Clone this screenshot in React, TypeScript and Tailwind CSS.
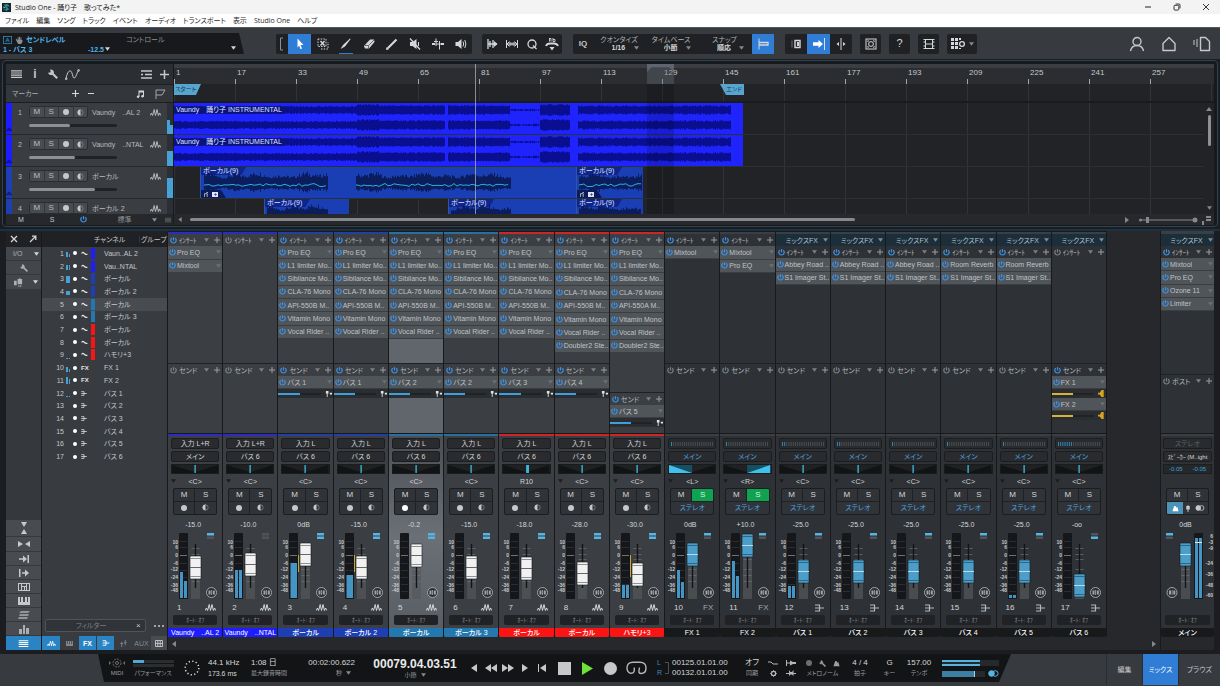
import React, { useState } from 'react';
import clsx from 'clsx';

type Kind = 'audio' | 'fx' | 'bus';

interface Channel {
  id: number;
  name: string;
  listName: string;
  kind: Kind;
  tone: Tone;
  inserts: string[];
  sends: string[];
  input?: string;
  output: string;
  pan: string;
  value: string;
  cap: number;
  levels?: number[];
  reduction?: number;
  mono?: boolean;
  fold?: boolean;
}

type Tone = 'blue' | 'navy' | 'steel' | 'red' | 'none';

const TONE_BAR: Record<Tone, string> = {
  blue: 'bg-[#2c2cc0]',
  navy: 'bg-[#24409c]',
  steel: 'bg-[#2b6f9e]',
  red: 'bg-[#cc2626]',
  none: 'bg-[#3b3f43]',
};

const TONE_LABEL: Record<Tone, string> = {
  blue: 'bg-[#1d1dff]',
  navy: 'bg-[#1e3eb4]',
  steel: 'bg-[#2478b0]',
  red: 'bg-[#fb1414]',
  none: 'bg-[#17191b]',
};

const VOCAL = ['Pro EQ', 'L1 limiter Mo..', 'Sibilance Mo..', 'CLA-76 Mono', 'API-550B M..', 'Vitamin Mono', 'Vocal Rider ..'];
const LEAD = VOCAL.map((v) => (v === 'API-550B M..' ? 'API-550A M..' : v));
const ABBEY = ['Abbey Road ..', 'S1 Imager St..'];
const ROOM = ['Room Reverb', 'S1 Imager St..'];

const CHANNELS: Channel[] = [
  { id: 1, name: 'Vaundy　..AL 2', listName: 'Vaun..AL 2', kind: 'audio', tone: 'blue', inserts: ['Pro EQ', 'Mixtool'], sends: [], input: '入力 L+R', output: 'メイン', pan: '<C>', value: '-15.0', cap: 23, levels: [39, 48], fold: true },
  { id: 2, name: 'Vaundy　..NTAL', listName: 'Vau..NTAL', kind: 'audio', tone: 'blue', inserts: [], sends: [], input: '入力 L+R', output: 'バス 6', pan: '<C>', value: '-10.0', cap: 20, levels: [37, 37], fold: true },
  { id: 3, name: 'ボーカル', listName: 'ボーカル', kind: 'audio', tone: 'navy', inserts: VOCAL, sends: ['バス 1'], input: '入力 L', output: 'バス 6', pan: '<C>', value: '0dB', cap: 10, levels: [30], reduction: 17, mono: true },
  { id: 4, name: 'ボーカル 2', listName: 'ボーカル 2', kind: 'audio', tone: 'navy', inserts: VOCAL, sends: ['バス 1'], input: '入力 L', output: 'バス 6', pan: '<C>', value: '-15.0', cap: 23, levels: [42], reduction: 17, mono: true },
  { id: 5, name: 'ボーカル', listName: 'ボーカル', kind: 'audio', tone: 'steel', inserts: VOCAL, sends: ['バス 2'], input: '入力 L', output: 'バス 6', pan: '<C>', value: '-0.2', cap: 11, mono: true },
  { id: 6, name: 'ボーカル 3', listName: 'ボーカル 3', kind: 'audio', tone: 'steel', inserts: VOCAL, sends: ['バス 2'], input: '入力 L', output: 'バス 6', pan: '<C>', value: '-15.0', cap: 23, mono: true },
  { id: 7, name: 'ボーカル', listName: 'ボーカル', kind: 'audio', tone: 'red', inserts: VOCAL, sends: ['バス 3'], input: '入力 L', output: 'バス 6', pan: 'R10', value: '-18.0', cap: 24, mono: true },
  { id: 8, name: 'ボーカル', listName: 'ボーカル', kind: 'audio', tone: 'red', inserts: [...VOCAL, 'Doubler2 Ste..'], sends: ['バス 4'], input: '入力 L', output: 'バス 6', pan: '<C>', value: '-28.0', cap: 29, mono: true, fold: true },
  { id: 9, name: 'ハモリ+3', listName: 'ハモリ+3', kind: 'audio', tone: 'red', inserts: [...LEAD, 'Doubler2 Ste..'], sends: ['バス 5'], input: '入力 L', output: 'バス 6', pan: '<C>', value: '-30.0', cap: 30, levels: [52, 52], reduction: 22, mono: true, fold: true },
  { id: 10, name: 'FX 1', listName: 'FX 1', kind: 'fx', tone: 'none', inserts: ['Mixtool'], sends: [], output: 'メイン', pan: '<L>', value: '0dB', cap: 10, levels: [37, 49], fold: true },
  { id: 11, name: 'FX 2', listName: 'FX 2', kind: 'fx', tone: 'none', inserts: ['Mixtool', 'Pro EQ'], sends: [], output: 'メイン', pan: '<R>', value: '+10.0', cap: 1, levels: [28, 43], fold: true },
  { id: 12, name: 'バス 1', listName: 'バス 1', kind: 'bus', tone: 'none', inserts: ABBEY, sends: [], output: 'メイン', pan: '<C>', value: '-25.0', cap: 27, levels: [53, 53], fold: true },
  { id: 13, name: 'バス 2', listName: 'バス 2', kind: 'bus', tone: 'none', inserts: ABBEY, sends: [], output: 'メイン', pan: '<C>', value: '-25.0', cap: 27, fold: true },
  { id: 14, name: 'バス 3', listName: 'バス 3', kind: 'bus', tone: 'none', inserts: ABBEY, sends: [], output: 'メイン', pan: '<C>', value: '-25.0', cap: 27, fold: true },
  { id: 15, name: 'バス 4', listName: 'バス 4', kind: 'bus', tone: 'none', inserts: ROOM, sends: [], output: 'メイン', pan: '<C>', value: '-25.0', cap: 27, fold: true },
  { id: 16, name: 'バス 5', listName: 'バス 5', kind: 'bus', tone: 'none', inserts: ROOM, sends: [], output: 'メイン', pan: '<C>', value: '-25.0', cap: 27, levels: [62, 62], fold: true },
  { id: 17, name: 'バス 6', listName: 'バス 6', kind: 'bus', tone: 'none', inserts: [], sends: ['FX 1', 'FX 2'], output: 'メイン', pan: '<C>', value: '-oo', cap: 41, fold: true },
];

const TRACKS = [
  { id: 1, name: 'Vaundy　..AL 2', tone: 'bg-[#1d1dff]', fill: 'w-[41px]', meter: [14, 9] },
  { id: 2, name: 'Vaundy　..NTAL', tone: 'bg-[#1d1dff]', fill: 'w-[46px]', meter: [15, 15] },
  { id: 3, name: 'ボーカル', tone: 'bg-[#1e3eb4]', fill: 'w-[66px]', meter: [20, 20] },
  { id: 4, name: 'ボーカル 2', tone: 'bg-[#1e3eb4]', fill: 'w-[44px]', meter: [0, 0] },
];

const BARS = [1, 17, 33, 49, 65, 81, 97, 113, 129, 145, 161, 177, 193, 209, 225, 241, 257];
const MENUS = ['ファイル', '編集', 'ソング', 'トラック', 'イベント', 'オーディオ', 'トランスポート', '表示', 'Studio One', 'ヘルプ'];

/* ---------- icons ---------- */

const Power = ({ on = true }: { on?: boolean }) => (
  <svg viewBox="0 0 8 8" className="size-[7px] shrink-0" fill="none" stroke={on ? '#3d92e6' : '#7b8084'} strokeWidth="1.4">
    <path d="M2.1 1.3A3.1 3.1 0 1 0 5.9 1.3" />
    <path d="M4 0.2V4" />
  </svg>
);

const Down = ({ className = 'text-[#85898d]' }: { className?: string }) => (
  <svg viewBox="0 0 6 4" className={clsx('h-[4px] w-[5px] shrink-0', className)} fill="currentColor">
    <path d="M0 0H6L3 4Z" />
  </svg>
);

const Plus = ({ className = 'size-[6px]' }: { className?: string }) => (
  <svg viewBox="0 0 6 6" className={clsx('shrink-0', className)} stroke="currentColor" strokeWidth="1">
    <path d="M3 0V6M0 3H6" />
  </svg>
);

const Wave = ({ className = 'h-[9px] w-[11px]' }: { className?: string }) => (
  <svg viewBox="0 0 11 9" className={clsx('shrink-0', className)} fill="none" stroke="currentColor" strokeWidth="1">
    <path d="M0.3 7.5L1.4 5L2.6 7.5L4.2 1.5L5.5 7.5L7 1.5L8.4 7.5L9.6 5L10.7 7.5" />
  </svg>
);

const BusIcon = ({ className = 'h-[8px] w-[9px]' }: { className?: string }) => (
  <svg viewBox="0 0 9 8" className={clsx('shrink-0', className)} fill="none" stroke="currentColor" strokeWidth="1.2">
    <path d="M0 1H4.5V7H0M0 4H9" />
  </svg>
);

const Wrench = ({ className = 'size-[9px]' }: { className?: string }) => (
  <svg viewBox="0 0 9 9" className={clsx('shrink-0', className)} fill="none" stroke="currentColor">
    <path d="M4.2 4.2L8.3 8.3" strokeWidth="1.9" />
    <path d="M2.6 0.9C5.2 0.7 5.6 4.6 3.2 4.9C2.2 5 1.2 4.6 0.8 3.8L2.9 3.3Z" strokeWidth="1" fill="currentColor" />
  </svg>
);

const Half = () => (
  <svg viewBox="0 0 8 8" className="size-[7px]">
    <circle cx="4" cy="4" r="3" fill="none" stroke="#8e9296" strokeWidth=".8" />
    <path d="M4 .6A3.4 3.4 0 0 0 4 7.4Z" fill="#c6c8ca" />
  </svg>
);

const Dot = ({ className = 'size-[6px] bg-[#c6c8ca]' }: { className?: string }) => (
  <span className={clsx('block shrink-0 rounded-full', className)} />
);

const Lines = ({ className = 'h-[8px] w-[11px]' }: { className?: string }) => (
  <svg viewBox="0 0 11 8" className={className} stroke="currentColor" strokeWidth="1.2">
    <path d="M0 .8H11M0 3H11M0 5.2H11M0 7.4H11" />
  </svg>
);

const Keys = ({ className = 'h-[8px] w-[11px]' }: { className?: string }) => (
  <svg viewBox="0 0 11 8" className={className} fill="currentColor">
    <path d="M0 0H2V5H3V0H5V5H6V0H8V5H9V0H11V8H0Z" />
  </svg>
);

/* ---------- window chrome ---------- */

const TitleBar = () => (
  <header className="flex h-[14px] items-center bg-[#f3f3f3] pl-[2px] text-[7px] text-[#1b1b1b] [font-family:'Open_Sans','Noto_Sans_CJK_JP',sans-serif]">
    <svg viewBox="0 0 10 10" className="mr-1 size-[9px]">
      <rect width="10" height="10" fill="#16242c" />
      <path d="M2 2L6 1L9 4L5 3.5L8 7L5 9L1 7L5 7Z" fill="#2d8a94" />
      <path d="M1 4L4 5L2 6Z" fill="#5ec1c4" />
    </svg>
    <h1>Studio One - 踊り子　歌ってみた*</h1>
    <div className="ml-auto flex items-center">
      <button aria-label="最小化" className="flex w-[29px] justify-center">
        <svg viewBox="0 0 8 8" className="size-[8px]" stroke="#222"><path d="M1 4H7" /></svg>
      </button>
      <button aria-label="元に戻す" className="flex w-[29px] justify-center">
        <svg viewBox="0 0 8 8" className="size-[8px]" fill="none" stroke="#222" strokeWidth=".9">
          <rect x="1" y="2.3" width="4.8" height="4.8" rx="1" />
          <path d="M2.6 1H6A1 1 0 0 1 7 2V5.4" />
        </svg>
      </button>
      <button aria-label="閉じる" className="flex w-[29px] justify-center">
        <svg viewBox="0 0 8 8" className="size-[8px]" stroke="#222" strokeWidth=".9"><path d="M1 1L7 7M7 1L1 7" /></svg>
      </button>
    </div>
  </header>
);

const MenuBar = () => (
  <nav className="flex h-[13px] items-center gap-[7px] bg-white pl-[5px] text-[7px] text-[#2a2a2a] [font-family:'Open_Sans','Noto_Sans_CJK_JP',sans-serif]">
    {MENUS.map((m) => (
      <button key={m} className="whitespace-nowrap">{m}</button>
    ))}
  </nav>
);

const TOOL_ICONS: { label: string; art: React.ReactNode; active?: boolean; under?: boolean }[] = [
  { label: '矢印', active: true, art: <path d="M4.5 1.5L10.5 8H7.6L9 11.6L7.5 12.2L6.2 8.8L4.5 10.4Z" fill="#fff" stroke="none" /> },
  { label: '範囲', art: <><path d="M2 2H10V9.5H2Z" strokeDasharray="1.5 1.2" /><path d="M4.5 4L8.5 8.5M8.5 4L4.5 8.5" strokeWidth="1.5" /><path d="M5 12H12V5" strokeDasharray="1.5 1.2" /></> },
  { label: '分割', under: true, art: <path d="M1.5 12L4 8L11 1.5L11.6 2L6 9.5Z" fill="#d5d7d8" stroke="none" /> },
  { label: '消しゴム', art: <><path d="M2 9L8 2.5H12L12.5 5L7 11.5H3Z" fill="#d5d7d8" stroke="none" /><path d="M3 8.5H6.5L12 3M6.5 8.5V11.5" stroke="#4a4d50" strokeWidth=".8" /></> },
  { label: 'ペイント', art: <><path d="M3 11L11.5 2.5" strokeWidth="2.2" /><path d="M1.5 12.5L3.5 12L2 10.5Z" fill="#d5d7d8" /></> },
  { label: 'ミュート', art: <><path d="M2 5H4.5L8.5 2V12L4.5 9H2Z" fill="#d5d7d8" stroke="none" /><path d="M2 1.5L12 12.5" strokeWidth="1.3" /><path d="M10.5 5V9" /></> },
  { label: 'ベンド', art: <><path d="M1 7H4M9.5 7H13" strokeWidth="1.8" /><path d="M5 1.5V9M8.5 4V12.5M5 7H8.5" /><path d="M3 4.5H7" /></> },
  { label: '試聴', art: <><path d="M1.5 5H4L7.5 2V12L4 9H1.5Z" fill="#d5d7d8" stroke="none" /><path d="M9 4.5Q10.3 7 9 9.5M10.8 3Q13 7 10.8 11" /></> },
];

const ToolArt = ({ children }: { children: React.ReactNode }) => (
  <svg viewBox="0 0 14 14" className="size-[14px]" fill="none" stroke="#d5d7d8" strokeWidth="1">{children}</svg>
);

const Picker = ({ label, value, width }: { label: string; value: string; width: string }) => (
  <label className={clsx('flex flex-col items-center justify-center gap-px text-[#aeb1b4]', width)}>
    <span>{label}</span>
    <span className="flex items-center gap-2 pl-3">
      <select className="appearance-none bg-transparent font-bold text-[#d5d7d8]" defaultValue={value}>
        <option>{value}</option>
      </select>
      <Down />
    </span>
  </label>
);

const Toolbar = () => (
  <div className="flex h-[32px] items-center border-t border-[#54575b] bg-[#373a3f] text-[7px]">
    <div className="flex h-[21px] w-[244px] justify-between bg-[#17191c] pt-px pr-2 pl-[3px] [clip-path:polygon(0_0,calc(100%-5px)_0,100%_100%,0_100%)]">
      <div className="flex w-[107px] flex-col justify-center gap-[2px] text-[#55b4ea]">
        <div className="flex items-center gap-[3px] font-bold">
          <svg viewBox="0 0 9 8" className="h-[8px] w-[9px]" fill="none" stroke="#2e7fae" strokeWidth=".9">
            <rect x=".5" y=".5" width="8" height="7" />
            <path d="M2.8 6L4.5 2L6.2 6M3.4 4.7H5.6" />
          </svg>
          <svg viewBox="0 0 9 9" className="size-[8px]" fill="#8d9194">
            <path d="M1.5 3L3 5V1.5H4V4H4.6V.8H5.6V4H6.2V1.5H7.2V4.5H8.4V6.5L7 9H3.5L.8 4Z" />
          </svg>
          <span>センドレベル</span>
        </div>
        <div className="flex items-center justify-between font-bold">
          <span>1 - バス 3</span>
          <span className="flex items-center gap-px">-12.5<Down className="text-[#d5d7d8]" /></span>
        </div>
      </div>
      <span className="mr-auto ml-4 pt-[2px] text-[#8d9194]">コントロール</span>
      <Down className="mt-3 text-[#d5d7d8]" />
    </div>

    <div className="ml-8 flex h-[20px] items-center rounded-[2px] bg-[#1f2124]">
      <svg viewBox="0 0 12 20" className="h-[20px] w-[12px]" fill="none" stroke="#8d9194"><path d="M7 4H4.5V16H7" /></svg>
      {TOOL_ICONS.map((t) => (
        <button
          key={t.label}
          aria-label={t.label}
          className={clsx('flex h-[20px] w-[23px] items-center justify-center', t.active && 'bg-[#2f7dd4]')}
        >
          <span className={clsx('flex h-full items-center pt-px', t.under ? 'border-b border-[#2f7dd4]' : 'pb-px')}>
            <ToolArt>{t.art}</ToolArt>
          </span>
        </button>
      ))}
    </div>

    <div className="ml-[10px] flex h-[20px] items-center rounded-[2px] bg-[#1f2124]">
      <button aria-label="トランジェント" className="flex w-[20px] justify-center">
        <ToolArt><path d="M3 2V12M5 4V10M3 7H12M8 3V11" strokeWidth="1.3" /><path d="M9 4L12.5 7L9 10Z" fill="#d5d7d8" stroke="none" /></ToolArt>
      </button>
      <button aria-label="ストレッチ" className="flex w-[20px] justify-center">
        <ToolArt><path d="M1.5 3V11M12.5 3V11M2 7H12M5 5V9M7 5.5V8.5M9 5V9" /><path d="M4.5 4.5L2 7L4.5 9.5M9.5 4.5L12 7L9.5 9.5" /></ToolArt>
      </button>
      <button aria-label="クオンタイズ適用" className="flex w-[20px] justify-center">
        <ToolArt><circle cx="7" cy="7" r="4" strokeWidth="1.3" /><path d="M8 8.5L11.5 12" strokeWidth="1.3" /></ToolArt>
      </button>
      <button aria-label="トランスポーズ" className="flex w-[20px] justify-center">
        <ToolArt><path d="M1 9Q2 6.5 5 6.5H9Q12 6.5 13 9" strokeWidth="1.8" /><path d="M4.5 1V4.5M4.5 1.5H6V4.5M8 1V4.5H10V2.5H8" strokeWidth=".9" /><path d="M4.5 10H9.5L7 13.5Z" fill="#d5d7d8" stroke="none" /></ToolArt>
      </button>
    </div>

    <div className="ml-[11px] flex h-[20px] items-center rounded-[2px] bg-[#1f2124]">
      <button className="w-[20px] text-[8px] font-bold text-[#c6c8ca]">IQ</button>
      <Picker label="クオンタイズ" value="1/16" width="w-[52px]" />
      <Picker label="タイムベース" value="小節" width="w-[52px]" />
      <Picker label="スナップ" value="順応" width="w-[55px]" />
      <button aria-label="スナップ切替" className="flex h-[20px] w-[22px] items-center justify-center bg-[#2f7dd4]">
        <ToolArt><path d="M3 1.5V12.5" /><path d="M3 5.5H12V8H3" strokeWidth="1.3" /></ToolArt>
      </button>
    </div>

    <div className="ml-[11px] flex h-[20px] items-center rounded-[2px] bg-[#1f2124]">
      <button aria-label="分割表示" className="flex w-[22px] justify-center">
        <ToolArt><path d="M3 3.5V10.5" stroke="#6b6f73" /><path d="M6 3.5H11V10.5H6Z" strokeWidth="1.4" /><path d="M9 5V9" strokeWidth="2" /></ToolArt>
      </button>
      <button aria-label="自動スクロール" className="flex h-[20px] w-[23px] items-center justify-center bg-[#2f7dd4]">
        <ToolArt><path d="M1 5.3H6.5V3L11 7L6.5 11V8.7H1Z" fill="#fff" stroke="none" /><path d="M12.5 1V13" stroke="#cfe2f7" /></ToolArt>
      </button>
      <button aria-label="カーソル追従" className="flex w-[22px] justify-center">
        <ToolArt><path d="M7 1V13" /><path d="M2.5 7L5 5V9ZM11.5 7L9 5V9Z" fill="#d5d7d8" stroke="none" /></ToolArt>
      </button>
    </div>

    <div className="ml-2 flex items-center gap-2">
      <button aria-label="マクロ" className="flex h-[20px] w-[21px] items-center justify-center rounded-[2px] bg-[#1f2124]">
        <ToolArt><rect x="2" y="2" width="10" height="10" /><circle cx="7" cy="7" r="2.4" /><path d="M3.8 4.8V3.8H4.8M9.2 3.8H10.2V4.8M3.8 9.2V10.2H4.8M10.2 9.2V10.2H9.2" /></ToolArt>
      </button>
      <button className="h-[20px] w-[21px] rounded-[2px] bg-[#1f2124] text-[11px] text-[#d5d7d8]">?</button>
      <button aria-label="ビデオ" className="flex h-[20px] w-[21px] items-center justify-center rounded-[2px] bg-[#1f2124]">
        <ToolArt><path d="M1.5 2.5H12.5M1.5 11.5H12.5M3.5 2.5V11.5M10.5 2.5V11.5M3.5 7H10.5M1.5 5H3.5M1.5 9H3.5M10.5 5H12.5M10.5 9H12.5" /></ToolArt>
      </button>
      <button aria-label="コントロールリンク" className="flex h-[20px] w-[30px] items-center justify-center gap-[3px] rounded-[2px] bg-[#1f2124]">
        <svg viewBox="0 0 15 12" className="h-[12px] w-[15px]" fill="#d5d7d8">
          <path d="M0 0H3V3H0ZM4 0H7V3H4ZM8 0H10V2H8ZM0 4H3V7H0ZM4 4H7V7H4ZM0 8H3V11H0ZM4 8H7V11H4ZM8 10H10V11H8Z" />
          <circle cx="11" cy="6" r="2.4" fill="none" stroke="#d5d7d8" strokeWidth="1.3" />
        </svg>
        <Down />
      </button>
    </div>

    <div className="mr-[9px] ml-auto flex items-center gap-4 text-[#c6c8ca]">
      <button aria-label="ユーザー">
        <svg viewBox="0 0 16 16" className="size-[16px]" fill="none" stroke="currentColor" strokeWidth="1.4"><circle cx="8" cy="5.5" r="4" /><path d="M1.5 15Q2.5 9.5 8 9.5T14.5 15" /></svg>
      </button>
      <button aria-label="ホーム">
        <svg viewBox="0 0 16 16" className="size-[16px]" fill="none" stroke="currentColor" strokeWidth="1.4"><path d="M2 7.5L8 1.5L14 7.5V14.5H2Z" strokeLinejoin="round" /></svg>
      </button>
      <button aria-label="ブラウザー">
        <svg viewBox="0 0 18 16" className="h-[16px] w-[18px]" fill="none" stroke="currentColor" strokeWidth="1.4"><path d="M1 4V9M4 3V11" strokeWidth="1" /><path d="M7.5 1.5H12.5L16.5 5.5V14.5H7.5Z" strokeLinejoin="round" /></svg>
      </button>
    </div>
  </div>
);

/* ---------- arrangement ---------- */

const noise = (n: number) => {
  const v = Math.sin(n * 12.9898) * 43758.5453;
  return v - Math.floor(v);
};

const band = (from: number, to: number, cy: number, amp: number, jitter: number) => {
  let d = '';
  for (let x = from; x < to; x++) {
    const a = amp - jitter * noise(x + cy);
    d += `M${x + 0.5} ${(cy - a).toFixed(1)}V${(cy + a).toFixed(1)}`;
  }
  return d;
};

const voice = (from: number, to: number, cy: number, seed: number) => {
  let d = '';
  for (let x = from; x < to; x++) {
    const swell = 0.7 + 0.3 * Math.sin((x + seed) / 5.3) * Math.sin((x + seed) / 13);
    const a = 3 + 10 * swell * (0.45 + 0.55 * noise(x + seed));
    d += `M${x + 0.5} ${(cy - a).toFixed(1)}V${(cy + a * 0.7).toFixed(1)}`;
  }
  return d;
};

const pitch = (from: number, to: number, cy: number) => {
  let d = `M${from} ${cy}`;
  for (let x = from + 2; x < to; x += 3) d += `L${x} ${(cy - 1.5 + 3 * noise(x)).toFixed(1)}`;
  return d;
};

const mixWave = [7, 22]
  .map((cy) =>
    [
      band(0, 183, cy, 4.2, 1.4),
      band(183, 205, cy, 6, 1.6),
      band(205, 271, cy, 5, 1.4),
      band(274, 336, cy, 5, 1.4),
      band(336, 366, cy, 1.4, 1.2),
      band(366, 396, cy, 6, 1.6),
      band(404, 557, cy, 4.8, 1.6),
    ].join('')
  )
  .join('');

const Tab = ({ text }: { text: string }) => (
  <span className="relative inline-block bg-[#0a1470]/60 px-[2px] pr-2 text-[7px] leading-[8px] whitespace-nowrap text-[#dfe3ff] [clip-path:polygon(0_0,100%_0,calc(100%-5px)_100%,0_100%)]">
    {text}
  </span>
);

const MixClip = () => (
  <div className="relative h-[31px] w-[569px] overflow-hidden bg-[#1e24fb] leading-[8px]">
    <svg viewBox="0 0 569 31" className="absolute inset-0 h-[31px] w-[569px]" stroke="#0a0f90"><path d={mixWave} /></svg>
    <Tab text="Vaundy　踊り子 INSTRUMENTAL" />
  </div>
);

interface VoiceClipProps {
  width: string;
  parts: [number, number][];
  size: number;
  seed: number;
  full?: boolean;
}

const VoiceClip = ({ width, parts, size, seed, full }: VoiceClipProps) => (
  <div className={clsx('relative flex h-[31px] shrink-0 flex-col items-start justify-between overflow-hidden border-l border-[#35549f] bg-[#1a3fb4]', width)}>
    <svg viewBox={`0 0 ${size} 31`} className="absolute inset-0 h-full" fill="none">
      {parts.map(([a, b]) => (
        <g key={a}>
          <path d={voice(a, b, 17, seed)} stroke="#0b1d5c" />
          {full && <path d={pitch(a, b, 18)} stroke="#2cb0da" strokeWidth="1" />}
        </g>
      ))}
    </svg>
    <Tab text="ボーカル(9)" />
    {full && (
      <span className="relative flex h-[8px] w-[25px] items-center gap-1 bg-[#0c1c58] pl-[3px] [clip-path:polygon(0_0,calc(100%-5px)_0,100%_100%,0_100%)]">
        <svg viewBox="0 0 5 6" className="h-[5px] w-[4px]" fill="none" stroke="#d5d7d8"><path d="M.5 6V2H4V6M3 .5H5" /></svg>
        <span className="flex h-[5px] w-[6px] items-center justify-center bg-[#dfe3ff]"><Plus className="size-[3px] text-[#0c1c58]" /></span>
      </span>
    )}
  </div>
);

const TrackHeader = ({ track }: { track: (typeof TRACKS)[number] }) => (
  <div className="flex h-[32px] shrink-0 border-b border-[#26282b] bg-[#3a3e43] text-[8px] text-[#b9bcbf]">
    <div className={clsx('flex w-[6px] shrink-0 items-end pb-[2px] text-[#0a0f60]', track.tone)}><Wave className="h-[5px] w-[6px]" /></div>
    <div className="flex flex-1 flex-col gap-[6px] pt-[3px] pl-[3px]">
      <div className="flex items-center">
        <span className="w-[10px] text-center text-[7px]">{track.id}</span>
        <div className="mr-1 ml-1 flex h-[12px] w-[59px] shrink-0 items-stretch divide-x divide-[#33363a] rounded-[2px] border border-[#2b2e31] bg-[#484c51]">
          <button className="flex-1">M</button>
          <button className="flex-1">S</button>
          <button aria-label="録音待機" className="flex flex-1 items-center justify-center"><Dot /></button>
          <button aria-label="モニター" className="flex flex-1 items-center justify-center"><Half /></button>
        </div>
        <span className="w-[58px] shrink-0 text-[7px] whitespace-nowrap">{track.name}</span>
        <Wave />
      </div>
      <div className="relative ml-[14px] h-[3px] w-[88px] rounded-full bg-[#202225]">
        <div className={clsx('h-full rounded-full bg-[#8d9194]', track.fill)} />
        <input type="range" aria-label={`${track.name} 音量`} className="absolute inset-0 h-full w-full opacity-0" />
      </div>
    </div>
    <div className="flex w-[6px] shrink-0 items-end bg-[#2b3036]">
      {track.meter.map((h, i) => (
        <div key={i} className="w-[3px] bg-[#44a2d6]" style={{ height: h }} />
      ))}
    </div>
  </div>
);

const Arrange = () => (
  <section className="mx-[2px] mt-px flex rounded border border-[#2b4458] bg-[#17191b] px-[3px] pt-[3px] pb-px">
    <div className="flex w-[168px] shrink-0 flex-col border-r border-[#17191b] text-[7px] text-[#aeb1b4]">
      <div className="flex h-[20px] items-center bg-[#2b2e32] pl-[5px] text-[#c6c8ca]">
        <button aria-label="トラックリスト"><Lines /></button>
        <button className="ml-[9px] w-[8px] text-[12px] font-bold">i</button>
        <button aria-label="ツール" className="ml-[9px]"><Wrench className="size-[10px]" /></button>
        <button aria-label="オートメーション" className="ml-[7px]">
          <svg viewBox="0 0 15 11" className="h-[11px] w-[15px]" fill="none" stroke="currentColor" strokeWidth="1"><path d="M1 10C2 3 5 0 6.5 3C8 6 8 10 9.5 9C11.5 7.5 12 3 13.5 1.5" /><circle cx="1.2" cy="9.8" r=".9" /><circle cx="13.6" cy="1.4" r=".9" /></svg>
        </button>
        <button aria-label="トラック幅" className="ml-auto">
          <svg viewBox="0 0 11 9" className="h-[9px] w-[11px]" stroke="currentColor" strokeWidth="1.4"><path d="M0 1H11M4 4.5H11M0 8H11M0 4.5H2" /></svg>
        </button>
        <button aria-label="トラック追加" className="mr-1 ml-2"><Plus className="size-[9px]" /></button>
      </div>
      <div className="flex h-[19px] items-center border-y border-[#1c1e20] bg-[#33363a] pr-[7px] pl-[6px]">
        <span>マーカー</span>
        <button aria-label="マーカー追加" className="ml-auto"><Plus className="size-[7px] text-[#d5d7d8]" /></button>
        <button aria-label="マーカー削除" className="mr-[42px] ml-[9px] h-px w-[6px] bg-[#d5d7d8]" />
        <svg viewBox="0 0 8 8" className="size-[8px]" fill="#d5d7d8">
          <path d="M2.5 .5H8V6.5H7V2.5H3.5V7H2.5Z" /><circle cx="2" cy="6.8" r="1.2" /><circle cx="6.5" cy="6.3" r="1.2" />
        </svg>
        <svg viewBox="0 0 11 10" className="ml-[11px] h-[10px] w-[11px]" fill="none" stroke="#a3a6a9"><path d="M1 10V1H10L7 6H1" /></svg>
      </div>
      <div className="flex h-[111px] flex-col overflow-hidden">
        {TRACKS.map((t) => <TrackHeader key={t.id} track={t} />)}
      </div>
      <div className="flex h-[11px] items-center bg-[#26282c] pr-px pl-[12px] text-[#c6c8ca]">
        <button>M</button>
        <button className="ml-[26px]">S</button>
        <button aria-label="電源" className="ml-[25px]"><Power /></button>
        <button className="ml-[31px] flex items-center text-[#8d9194]">標準</button>
        <Down className="ml-auto text-[#8d9194]" />
        <Lines className="mr-px ml-2 h-[6px] w-[6px] text-[#6b6f73]" />
      </div>
    </div>

    <div className="relative flex min-w-0 flex-1 flex-col bg-[#212326]">
      <div className="h-[4px] bg-[#3a3e42]" />
      <div className="flex h-[16px] overflow-hidden bg-[#2b2d31] text-[8px] text-[#c6c8ca]">
        {BARS.map((b) => (
          <div key={b} className="flex w-[61px] shrink-0 flex-col justify-between pt-px">
            <span className="pl-[2px]">{b}</span>
            <i className="h-[5px] w-px bg-[#a3a6a9]" />
          </div>
        ))}
      </div>
      <div className="flex h-[19px] items-start border-b-2 border-[#191b1d] bg-[repeating-linear-gradient(90deg,#303337_0_1px,transparent_1px_61px)] text-[6px] text-[#123a54]">
        <span className="h-[11px] w-[27px] bg-[#57a5cf] pt-[2px] pl-px whitespace-nowrap [clip-path:polygon(0_0,100%_0,calc(100%-5px)_100%,0_100%)]">スタート</span>
        <span className="ml-[519px] h-[11px] w-[24px] bg-[#57a5cf] pt-[2px] pl-[6px] whitespace-nowrap [clip-path:polygon(0_0,100%_0,100%_100%,6px_100%)]">エンド</span>
      </div>
      <div className="flex h-[111px]">
        <div className="flex min-w-0 flex-1 flex-col overflow-hidden bg-[repeating-linear-gradient(90deg,#303337_0_1px,transparent_1px_61px)]">
          <div className="h-[32px] shrink-0 border-b border-[#2d3033]"><MixClip /></div>
          <div className="h-[32px] shrink-0 border-b border-[#2d3033]"><MixClip /></div>
          <div className="flex h-[32px] shrink-0 border-b border-[#2d3033] pl-[26px]">
            <VoiceClip width="w-[376px]" size={376} parts={[[3, 127], [155, 310]]} seed={3} full />
            <VoiceClip width="w-[67px]" size={67} parts={[[2, 65]]} seed={40} full />
          </div>
          <div className="flex h-[32px] shrink-0 pl-[90px]">
            <VoiceClip width="w-[85px]" size={85} parts={[[2, 63]]} seed={9} />
            <div className="w-[99px]" />
            <VoiceClip width="w-[128px]" size={128} parts={[[2, 62]]} seed={22} />
            <VoiceClip width="w-[67px]" size={67} parts={[[2, 64]]} seed={31} />
          </div>
        </div>
        <div className="flex w-[10px] flex-col items-center py-1">
          <svg viewBox="0 0 6 4" className="h-[4px] w-[6px]" fill="#85898d"><path d="M0 4H6L3 0Z" /></svg>
          <div className="mt-1 h-[31px] w-[3px] rounded-full bg-[#8d9194]" />
          <Down className="mt-auto text-[#85898d]" />
        </div>
      </div>
      <div className="flex h-[11px] items-center bg-[#26282c] pl-[4px]">
        <svg viewBox="0 0 4 6" className="h-[5px] w-[4px]" fill="#85898d"><path d="M4 0V6L0 3Z" /></svg>
        <div className="ml-2 h-[3px] w-[665px] rounded-full bg-[#85898d]" />
        <svg viewBox="0 0 4 6" className="mr-[9px] ml-auto h-[6px] w-[4px]" fill="#85898d"><path d="M0 0V6L4 3Z" /></svg>
        <svg viewBox="0 0 76 10" className="h-[10px] w-[76px]" fill="#85898d">
          <path d="M2 4.5H58V5.5H2ZM8 2H11V8H8ZM68 1H73V3H68ZM68 4H73V6H68ZM64 6H66V10H64Z" />
          <circle cx="2.5" cy="5" r="1.5" /><circle cx="57" cy="5" r="2.5" />
        </svg>
      </div>
      {/* loop range and playhead run across every lane */}
      <div className="pointer-events-none absolute top-0 left-[473px] h-[150px] w-[27px] bg-black/15">
        <div className="h-[20px] bg-[#8590a0]/30" />
        <div className="absolute top-0 h-[8px] w-full bg-[#6d747d]/60 [clip-path:polygon(0_0,100%_0,100%_100%,22px_3px,5px_3px,0_100%)]" />
      </div>
      <div className="pointer-events-none absolute top-0 left-[301px] h-[150px] w-px bg-[#b9bcbf]/70" />
    </div>
  </section>
);

/* ---------- console ---------- */

const SideButton = ({ label, height, children }: { label: string; height: string; children: React.ReactNode }) => (
  <button aria-label={label} className={clsx('flex items-center justify-center border-b border-[#35383c] bg-[#484c50] text-[#c6c8ca]', height)}>
    <svg viewBox="0 0 14 12" className="h-[12px] w-[14px]" fill="currentColor">{children}</svg>
  </button>
);

const SideRail = () => (
  <div className="flex w-[36px] shrink-0 flex-col border-r border-[#17191b] bg-[#35393d] text-[7px] text-[#aeb1b4]">
    <div className="flex h-[16px] items-center justify-between bg-[#1f2124] px-1 text-[#d5d7d8]">
      <button aria-label="閉じる"><svg viewBox="0 0 8 8" className="size-[8px]" stroke="currentColor" strokeWidth="1.3"><path d="M1 1L7 7M7 1L1 7" /></svg></button>
      <button aria-label="切り離し"><svg viewBox="0 0 8 8" className="size-[8px]" fill="none" stroke="currentColor" strokeWidth="1.3"><path d="M1 7L6.5 1.5M3 1.2H6.8V5" /></svg></button>
    </div>
    <button className="flex h-[13px] items-center justify-between bg-[#43474b] pr-[2px] pl-[7px]">I/O<Down className="text-[#d5d7d8]" /></button>
    <button aria-label="設定" className="mt-px flex h-[13px] items-center justify-center bg-[#43474b]"><Wrench className="size-[8px]" /></button>
    <button aria-label="外部機器" className="mt-px flex h-[14px] items-center justify-between bg-[#43474b] pr-[3px] pl-2">
      <svg viewBox="0 0 10 10" className="size-[9px]" fill="currentColor"><path d="M0 3H3V8H0ZM4 1H9V7H4ZM5 8H6V10H5ZM7 8H8V10H7ZM6 0H7V1H6Z" /></svg>
      <Down className="text-[#d5d7d8]" />
    </button>
    <div className="mt-auto flex flex-col">
      <SideButton label="縦幅" height="h-[17px]"><path d="M4 0H10L7 5ZM4 12H10L7 7Z" /></SideButton>
      <SideButton label="横幅" height="h-[15px]"><path d="M1 3V9L6 6ZM13 3V9L8 6Z" /></SideButton>
      <SideButton label="入力" height="h-[14px]"><path d="M2 5.2H6V2.5L10 6L6 9.5V6.8H2ZM10.5 2H12V10H10.5Z" /></SideButton>
      <SideButton label="出力" height="h-[14px]"><path d="M2 2H3.5V10H2ZM5 5.2H8V2.5L12 6L8 9.5V6.8H5Z" /></SideButton>
      <SideButton label="外部" height="h-[14px]"><path fillRule="evenodd" d="M1 2H13V10H1ZM2 3V9H4V3ZM5 3V5H9V3ZM5 6V9H7V6ZM8 6V9H9V6ZM10 3V9H12V3Z" /></SideButton>
      <SideButton label="インストゥルメント" height="h-[14px]"><path d="M1 2H3V7H4V2H6V7H8V2H10V7H11V2H13V10H1Z" /></SideButton>
      <SideButton label="シーン" height="h-[14px]"><path d="M4 2H13L11 4H2ZM3 5H12L11 7H2ZM2 8H11L10 10H1Z" opacity=".6" /></SideButton>
      <SideButton label="リモート" height="h-[14px]"><path d="M2 6H5V11H2ZM6 2H8V11H6ZM9 5H12V11H9Z" opacity=".8" /></SideButton>
      <button aria-label="チャンネルリスト" className="flex h-[14px] items-center justify-center bg-[#2a84c4] text-white"><Lines className="h-[7px] w-[11px]" /></button>
    </div>
  </div>
);

const LIST_LEVELS: Record<number, [number, number]> = { 1: [5, 3], 2: [5, 5], 3: [7, 7], 4: [4, 4], 9: [1, 1], 10: [5, 3], 11: [7, 5], 12: [1, 1] };

const ChannelList = () => (
  <div className="flex w-[126px] shrink-0 flex-col border-r border-[#17191b] bg-[#383b40] text-[7px] text-[#c6c8ca]">
    <div className="flex h-[16px] items-center bg-[#1f2124]">
      <span className="w-[97px] pl-[52px]">チャンネル</span>
      <span className="border-l border-[#33363a] pl-px whitespace-nowrap">グループ</span>
    </div>
    <ul className="flex h-[216px] flex-col">
      {CHANNELS.map((c) => (
        <li key={c.id} className={clsx('flex flex-1 items-center', c.id === 5 && 'bg-[#484c50]')}>
          <span className="w-[22px] text-right">{c.id}</span>
          <span className={clsx('ml-[2px] flex h-[8px] w-[4px] items-end', c.id !== 3 && c.id !== 4 && 'gap-px')}>
            {(LIST_LEVELS[c.id] ?? []).map((h, i) => (
              <i key={i} className="flex-1 bg-[#44a2d6]" style={{ height: h }} />
            ))}
          </span>
          <Dot className="ml-[3px] size-[4px] bg-white" />
          <span className="ml-[4px] flex w-[10px] items-center text-[6px] font-bold text-[#e3e5e6]">
            {c.kind === 'audio' && <svg viewBox="0 0 8 6" className="h-[5px] w-[7px]" fill="none" stroke="currentColor" strokeWidth="1.4"><path d="M.5 3Q2 .5 3.5 2.5T7.5 4" /></svg>}
            {c.kind === 'fx' && 'FX'}
            {c.kind === 'bus' && <BusIcon className="h-[5px] w-[6px]" />}
          </span>
          <span className={clsx('h-[11px] w-[4px]', c.kind === 'audio' && TONE_LABEL[c.tone])} />
          <span className="ml-[9px] whitespace-nowrap">{c.listName}</span>
        </li>
      ))}
    </ul>
    <div className="mt-auto flex items-center gap-2 pb-1 pl-[3px]">
      <div className="flex h-[13px] w-[101px] items-center rounded-[2px] border border-[#505459] bg-[#303337] pr-1">
        <input aria-label="フィルター" placeholder="フィルター" className="w-[90px] bg-transparent text-center text-[7px] placeholder:text-[#7b8084]" />
        <span className="text-[8px]">×</span>
      </div>
      <span className="flex gap-[2px]"><Dot className="size-[2px] bg-[#c6c8ca]" /><Dot className="size-[2px] bg-[#c6c8ca]" /><Dot className="size-[2px] bg-[#c6c8ca]" /></span>
    </div>
    <div className="flex h-[14px] items-stretch gap-px text-[7px] text-[#85898d]">
      <button aria-label="オーディオ" className="flex w-[18px] items-center justify-center bg-[#2a84c4] text-white"><Wave className="h-[7px] w-[9px]" /></button>
      <button aria-label="鍵盤" className="flex w-[17px] items-center justify-center"><Keys className="h-[5px] w-[7px]" /></button>
      <button className="w-[17px] bg-[#2a84c4] font-bold text-white">FX</button>
      <button aria-label="バス" className="flex w-[17px] items-center justify-center bg-[#2a84c4] text-white"><BusIcon className="h-[6px] w-[8px]" /></button>
      <button aria-label="VCA" className="flex w-[17px] items-center justify-center">
        <svg viewBox="0 0 8 8" className="size-[7px]" stroke="currentColor"><path d="M2 2V8M6 0V6M.5 4H3.5M4.5 3H7.5" /></svg>
      </button>
      <button className="w-[17px]">AUX</button>
      <button aria-label="グリッド" className="flex flex-1 items-center justify-center bg-[#484c50] text-[#c6c8ca]">
        <svg viewBox="0 0 8 7" className="h-[7px] w-[8px]" fill="none" stroke="currentColor" strokeWidth=".9"><path d="M.5 .5H7.5V6.5H.5ZM.5 3.5H7.5M2.8 .5V6.5M5.2 .5V6.5" /></svg>
      </button>
    </div>
  </div>
);

const SectionHead = ({ text, on, tight }: { text: string; on: boolean; tight?: boolean }) => (
  <div className="flex h-[12px] shrink-0 items-center gap-[2px] overflow-hidden pr-[2px] pl-[2px] text-[7px] text-[#b4b7ba]">
    <Power on={on} />
    <span className={clsx('whitespace-nowrap', tight && '[font-feature-settings:normal]')}>{text}</span>
    <Down className="ml-auto text-[#7b8084]" />
    <button aria-label={`${text} 追加`} className="ml-[3px] text-[#9b9fa2]"><Plus /></button>
  </div>
);

const Slot = ({ text }: { text: string }) => (
  <button className="flex min-h-[13px] w-full flex-1 items-center gap-px border-b border-[#3a3d41] bg-[#50555a] pl-px text-left text-[7px] text-[#c0c3c5]">
    <Power />
    <span className="flex-1 whitespace-nowrap">{text}</span>
    {text.length < 9 && <Down className="mr-px text-[#6b7075]" />}
  </button>
);

// three slots share 40px, so the rack height is worked out from the slot count
const Rack = ({ slots }: { slots: string[] }) => (
  <div className="flex shrink-0 flex-col" style={{ height: Math.round((slots.length * 40) / 3) }}>
    {slots.map((s) => <Slot key={s} text={s} />)}
  </div>
);

const SendSlot = ({ text, gold }: { text: string; gold?: boolean }) => (
  <div className="flex flex-col">
    <Slot text={text} />
    <div className="relative flex h-[9px] items-center bg-[#2b2e31] pr-px">
      <div className={clsx('h-[2px] w-2/5', gold ? 'bg-[#d6b23c]' : 'bg-[#3f9fdd]')} />
      <div className="h-[2px] flex-1 bg-[#202225]" />
      <svg viewBox="0 0 8 8" className="ml-1 size-[7px]" fill={gold ? '#d6a520' : '#e3e5e6'}>
        {gold ? <path d="M4 0H6.5V8H4L2 5H0V3H2Z" /> : <path d="M1 1H4V4H3V8H2V4H1ZM5.5 3H8V5H5.5Z" />}
      </svg>
      <input type="range" aria-label={`${text} センド量`} className="absolute inset-0 h-full w-full opacity-0" />
    </div>
  </div>
);

const PanView = ({ pan }: { pan: string }) => (
  <svg viewBox="0 0 48 10" preserveAspectRatio="none" className="mt-[2px] h-[10px] w-full border border-[#191b1d] bg-[#1f2123]">
    <path d="M0 0L24 9L48 0V10H0Z" fill="#121315" />
    {pan === '<L>' && <><path d="M0 0H24V10H0Z" fill="#155062" /><path d="M0 0L24 10H0Z" fill="#3fc1ee" /></>}
    {pan === '<R>' && <><path d="M24 0H48V10H24Z" fill="#155062" /><path d="M48 0L24 10H48Z" fill="#3fc1ee" /></>}
    {pan.includes('C') && <path d="M23.3 0H24.7V10H23.3Z" fill="#3fb4de" />}
    {pan === 'R10' && <path d="M24 0H27V10H24Z" fill="#3fb4de" />}
  </svg>
);

const SCALE: [string, number][] = [['10', 9], ['6', 14], ['0', 22], ['-6', 30], ['-12', 36], ['-24', 44], ['-36', 52], ['-48', 57]];

const Knob = ({ x, y, blue }: { x: number; y: number; blue?: boolean }) => (
  <g>
    <rect x={x} y={y} width="11" height="23" rx="1" fill={blue ? '#4c9ec9' : '#f1f1f1'} stroke="#15171a" strokeWidth=".6" />
    <path d={`M${x} ${y + 2.5}H${x + 11}M${x} ${y + 20.5}H${x + 11}`} stroke={blue ? '#1e5b7d' : '#77797b'} strokeWidth=".8" />
    <path d={`M${x} ${y + 11.5}H${x + 11}`} stroke={blue ? '#bfe3f5' : '#55585b'} strokeWidth=".9" />
  </g>
);

const Fader = ({ channel: c }: { channel: Channel }) => (
  <div className="relative h-[67px] w-[54px]">
    <svg viewBox="0 0 54 67" className="h-[67px] w-[54px]">
      {SCALE.map(([t, y]) => (
        <text key={t} x="10" y={y + 2} textAnchor="end" fontSize="5" fontWeight="bold" fill="#c6c8ca">{t}</text>
      ))}
      <rect x="11" y="0" width="9" height="66" rx="1" fill="#15171a" />
      <path d="M12 8.5H19M12 14.5H19M12 30.5H19M12 37.5H19M12 44.5H19M12 51.5H19M12 58.5H19" stroke="#283643" strokeWidth=".8" />
      <path d="M12 22.5H19" stroke="#85898d" strokeWidth=".8" />
      {c.levels?.length === 1 && <rect x="12.5" y={c.levels[0]} width="6.5" height={65 - c.levels[0]} fill="#4495c3" />}
      {c.levels?.length === 2 && c.levels.map((l, i) => <rect key={i} x={12 + i * 4} y={l} width="3" height={65 - l} fill="#4495c3" />)}
      {c.reduction && <rect x="20" y="22" width="1" height={c.reduction} fill="#c9a62c" />}
      <rect x="23" y={c.cap + 12} width="9" height={54 - c.cap} fill="#55585b" opacity=".7" />
      <path d="M23.5 15.5H31.5M23.5 21.5H31.5M23.5 26.5H31.5M23.5 36.5H31.5M23.5 42.5H31.5M23.5 48.5H31.5" stroke="#6f7377" strokeWidth=".7" />
      <path d="M27.5 11V55" stroke="#121416" strokeWidth="1.4" />
      <Knob x={22} y={c.cap} blue={c.kind !== 'audio'} />
      <rect x="39" y="0" width="7" height="2.5" fill={c.id === 2 || c.id === 17 ? '#505458' : '#56b4e2'} />
      <rect x="39" y="3.5" width="7" height="2.5" fill={c.mono || c.id === 17 ? '#56b4e2' : '#505458'} />
      <circle cx="43.5" cy="59.5" r="5" fill="#2d3033" stroke="#a3a6a9" strokeWidth="1" />
      <path d="M40.5 57.5H42.5V61.5H40.5ZM43.2 57H44V62H43.2ZM44.8 57.5H46.8V61.5H44.8Z" fill="#a3a6a9" />
    </svg>
    <input type="range" aria-label={`${c.name} フェーダー`} className="absolute top-0 left-[22px] h-full w-[11px] opacity-0 [writing-mode:vertical-lr]" />
  </div>
);

const BOX = 'h-[11px] w-full shrink-0 overflow-hidden rounded-[2px] border border-[#1b1d1f] bg-[#292b2e] text-[7px] whitespace-nowrap';

const BusMeter = ({ lit }: { lit: number }) => (
  <div className={BOX}>
    <svg viewBox="0 0 46 9" preserveAspectRatio="none" className="h-[9px] w-full">
      {Array.from({ length: 20 }, (_, i) => (
        <path key={i} d={`M${2.5 + i * 2.15} 3V7`} stroke={i < lit ? '#2f86b5' : '#4b5054'} strokeWidth="1" />
      ))}
    </svg>
  </div>
);

const NameTag = ({ name, tone }: { name: string; tone: Tone }) => (
  <div className={clsx('mt-[3px] h-[9px] shrink-0 overflow-hidden rounded-b-[2px] text-center text-[7px] leading-[9px] font-medium whitespace-nowrap text-white', TONE_LABEL[tone])}>
    {name}
  </div>
);

const Strip = ({ channel: c }: { channel: Channel }) => {
  const audio = c.kind === 'audio';
  const selected = c.id === 5;
  const solo = c.kind === 'fx';
  const idle = selected ? '' : audio ? 'bg-[#3b3e42]' : 'bg-[#2e3236]';
  return (
    <article className="flex min-w-0 flex-col border-r border-[#17191b]">
      <div className={clsx('h-[3px] shrink-0 border-t border-[#17191b]', TONE_BAR[c.tone])} />
      <div className={clsx('flex flex-1 flex-col', selected ? 'bg-[#61666c]' : idle)}>
        {c.kind === 'bus' && (
          <button className="flex h-[12px] shrink-0 items-center justify-center gap-[5px] bg-[#1c2e3a] pl-2 text-[7px] text-[#b4c2cb]">ミックスFX<Down className="text-[#7b8c96]" /></button>
        )}
        <div className={selected ? 'bg-[#3b3e42]' : ''}>
          <SectionHead text="ｲﾝｻｰﾄ" on={c.id !== 2 && c.id !== 17} tight />
        </div>
        <Rack slots={c.inserts} />
      </div>
      <div className={clsx('shrink-0 border-t border-[#1f2124]', c.id === 9 ? 'h-[41px]' : 'h-[70px]', selected ? 'bg-[#61666c]' : idle)}>
        <div className={selected ? 'bg-[#3b3e42]' : ''}>
          <SectionHead text="センド" on={c.sends.length > 0} />
        </div>
        {c.sends.map((s) => <SendSlot key={s} text={s} gold={c.kind === 'bus'} />)}
      </div>
      <div className={clsx('h-[3px] shrink-0 border-t border-[#17191b]', TONE_BAR[c.tone])} />
      <div className={clsx('flex flex-col', selected ? 'bg-linear-to-b from-[#4b4f54] via-[#6b7077] to-[#575c62]' : idle)}>
        <div className="flex flex-col px-[3px] pt-[2px] text-[#d5d7d8]">
          {audio ? <button className={BOX}>{c.input}</button> : <BusMeter lit={c.id === 17 ? 7 : c.id === 12 || c.id === 13 ? 2 : 1} />}
          <button className={clsx(BOX, 'mt-[2px]', !audio && 'text-[#4aa3e0]')}>{c.output}</button>
          <PanView pan={c.pan} />
          <div className="flex h-[14px] items-center text-[7px]">
            <span className="w-2">{c.fold && <Down className="text-[#1b1d1f]" />}</span>
            <span className="flex-1 pr-2 text-center">{c.pan}</span>
          </div>
          <div className="mx-[2px] grid h-[27px] grid-cols-2 grid-rows-2 overflow-hidden rounded-[2px] border border-[#1b1d1f] bg-[#303337] text-[8px]">
            <button className="border-r border-b border-[#1f2124]">M</button>
            <button className={clsx('border-b border-[#1f2124]', solo && 'bg-[#0fa251] text-[#d9f2e3]')}>S</button>
            {audio ? (
              <>
                <button aria-label="録音待機" className="flex items-center justify-center border-r border-[#1f2124]"><Dot className={clsx('size-[6px]', selected ? 'bg-white' : 'bg-[#c6c8ca]')} /></button>
                <button aria-label="モニター" className="flex items-center justify-center"><Half /></button>
              </>
            ) : (
              <button className="col-span-2 text-[7px] text-[#4aa3e0]">ステレオ</button>
            )}
          </div>
        </div>
        <div className="flex h-[18px] items-center justify-center pr-1 text-[7px] text-[#d5d7d8]">{c.value}</div>
        <Fader channel={c} />
        <div className="flex h-[15px] items-center justify-between pr-[6px] pl-[9px] text-[8px] text-[#d5d7d8]">
          <span>{c.id}</span>
          {audio && <Wave />}
          {c.kind === 'fx' && <span className="text-[#a3a6a9]">FX</span>}
          {c.kind === 'bus' && <BusIcon className="h-[8px] w-[9px] text-[#b4b7ba]" />}
        </div>
        <button className="mx-[5px] h-[10px] shrink-0 rounded-[2px] bg-[#202225] text-[6px] text-[#85898d] [font-feature-settings:normal]">ｵｰﾄ: ｵﾌ</button>
        <NameTag name={c.name} tone={c.tone} />
      </div>
    </article>
  );
};

const MASTER_SCALE: [string, number][] = [['6', 3], ['-3', 9], ['-9', 15], ['-24', 30], ['-36', 41], ['-48', 52], ['-60', 62]];

const MasterStrip = () => (
  <article className="flex w-[54px] shrink-0 flex-col border-l border-[#17191b]">
    <div className="h-[3px] shrink-0 bg-[#3b3f43]" />
    <div className="flex flex-1 flex-col bg-[#2e3236]">
      <button className="flex h-[12px] shrink-0 items-center justify-center gap-[5px] bg-[#1c2e3a] pl-2 text-[7px] text-[#b4c2cb]">ミックスFX<Down className="text-[#7b8c96]" /></button>
      <SectionHead text="ｲﾝｻｰﾄ" on tight />
      <Rack slots={['Mixtool', 'Pro EQ', 'Ozone 11', 'Limiter']} />
    </div>
    <div className="h-[59px] shrink-0 border-t border-[#1f2124] bg-[#2e3236]">
      <SectionHead text="ポスト" on={false} />
    </div>
    <div className="h-[3px] shrink-0 border-t border-[#17191b] bg-[#3b3f43]" />
    <div className="flex flex-col bg-[#2e3236]">
      <div className="flex flex-col px-[2px] pt-[2px] text-[#d5d7d8]">
        <button className={clsx(BOX, 'text-[#5d6165]')}>ステレオ</button>
        <button className="mt-[2px] h-[11px] w-full rounded-[2px] border border-[#1b1d1f] bg-[#292b2e] text-[6px] whitespace-nowrap [font-feature-settings:normal]">ｽﾋﾟｰｶｰ (M..ight</button>
        <div className="mt-[2px] mb-[14px] flex h-[10px] items-center justify-around border border-[#1b1d1f] bg-[#25282b] text-[6px] text-[#3f9fdd]">
          <span>-0.05</span><span>-0.05</span>
        </div>
        <div className="mx-[3px] flex h-[27px] flex-col overflow-hidden rounded-[2px] border border-[#1b1d1f] bg-[#303337] text-[8px]">
          <div className="flex flex-1 border-b border-[#1f2124]">
            <button className="flex-1 border-r border-[#1f2124]">M</button>
            <button className="flex-1">S</button>
          </div>
          <div className="flex flex-1">
            <button aria-label="メトロノーム" className="flex w-4 items-center justify-center bg-[#4c93b8]">
              <svg viewBox="0 0 8 8" className="size-[7px]" fill="#fff"><path d="M2.5 1H4L5 3L6 2L7.5 7H.5Z" /></svg>
            </button>
            <button aria-label="ポストフェーダー" className="flex flex-1 items-center justify-center">
              <svg viewBox="0 0 4 8" className="h-[7px] w-[4px]" fill="#c6c8ca"><path d="M0 1H4V5H0ZM1.5 0H2.5V8H1.5Z" /></svg>
            </button>
            <button aria-label="ステレオ切替" className="flex w-4 items-center justify-center">
              <svg viewBox="0 0 11 7" className="h-[6px] w-[10px]" fill="none" stroke="#c6c8ca"><circle cx="3.5" cy="3.5" r="2.8" fill="#c6c8ca" /><circle cx="7.3" cy="3.5" r="2.8" /></svg>
            </button>
          </div>
        </div>
      </div>
      <div className="flex h-[18px] items-center justify-center pr-1 text-[7px] text-[#d5d7d8]">0dB</div>
      <div className="relative h-[67px]">
        <svg viewBox="0 0 53 67" className="h-[67px] w-[53px]">
          <rect x="5" y="0" width="7" height="2.5" fill="#56b4e2" />
          <rect x="5" y="3.5" width="7" height="2.5" fill="#505458" />
          <circle cx="11" cy="59.5" r="5" fill="#2d3033" stroke="#a3a6a9" />
          <path d="M8 57.5H10V61.5H8ZM10.7 57H11.5V62H10.7ZM12.3 57.5H14.3V61.5H12.3Z" fill="#a3a6a9" />
          <rect x="20" y="22" width="9" height="44" fill="#55585b" opacity=".7" />
          <path d="M20.5 36.5H28.5M20.5 42.5H28.5M20.5 48.5H28.5" stroke="#6f7377" strokeWidth=".7" />
          <path d="M24.5 11V55" stroke="#121416" strokeWidth="1.4" />
          <Knob x={19} y={10} blue />
          <rect x="33" y="0" width="9" height="66" rx="1" fill="#15171a" />
          <path d="M34 5H37V65H34ZM38 5H41V65H38Z" fill="#4495c3" />
          <path d="M34 9.5H41" stroke="#e8e8d8" strokeWidth="1" />
          {MASTER_SCALE.map(([t, y]) => (
            <text key={t} x="52" y={y + 2} textAnchor="end" fontSize="5" fontWeight="bold" fill="#c6c8ca">{t}</text>
          ))}
        </svg>
        <input type="range" aria-label="メイン フェーダー" className="absolute top-0 left-[19px] h-full w-[11px] opacity-0 [writing-mode:vertical-lr]" />
      </div>
      <div className="h-[15px]" />
      <button className="mx-[4px] h-[10px] shrink-0 rounded-[2px] bg-[#202225] text-[6px] text-[#85898d] [font-feature-settings:normal]">ｵｰﾄ: ｵﾌ</button>
      <NameTag name="メイン" tone="none" />
    </div>
    <div className="h-[13px] shrink-0 bg-[#26282c]" />
  </article>
);

const Console = () => (
  <section className="mt-[2px] flex min-h-[420px] flex-1 border-t-2 border-[#1e3140] bg-[#1b1d20] px-[6px]">
    <SideRail />
    <ChannelList />
    <div className="flex min-w-0 flex-1 flex-col">
      <div className="flex flex-1">
        <div className="grid min-w-0 flex-1 grid-cols-17">
          {CHANNELS.map((c) => <Strip key={c.id} channel={c} />)}
        </div>
        <div className="w-[53px] shrink-0 bg-[#26282c]" />
      </div>
      <div className="flex h-[13px] shrink-0 items-center justify-between bg-[#26282c] px-1">
        <svg viewBox="0 0 4 6" className="h-[6px] w-[4px]" fill="#85898d"><path d="M4 0V6L0 3Z" /></svg>
        <svg viewBox="0 0 4 6" className="h-[6px] w-[4px]" fill="#85898d"><path d="M0 0V6L4 3Z" /></svg>
      </div>
    </div>
    <MasterStrip />
  </section>
);

/* ---------- transport ---------- */

interface ReadoutProps {
  width: string;
  top: React.ReactNode;
  bottom: React.ReactNode;
  align?: string;
}

const Readout = ({ width, top, bottom, align = 'items-center' }: ReadoutProps) => (
  <div className={clsx('flex shrink-0 flex-col justify-center gap-[2px] whitespace-nowrap', width, align)}>
    <span className="flex h-[8px] items-center text-[8px] text-[#d5d7d8]">{top}</span>
    <span className="flex h-[8px] items-center gap-1 text-[6px] text-[#9b9fa2]">{bottom}</span>
  </div>
);

const NAV: [string, string][] = [
  ['前へ', 'M9 2V10L3 6Z'],
  ['巻き戻し', 'M6 2V10L0 6ZM12 2V10L6 6Z'],
  ['早送り', 'M0 2V10L6 6ZM6 2V10L12 6Z'],
  ['次へ', 'M3 2V10L9 6Z'],
  ['先頭へ', 'M2 2H3V10H2ZM10 2V10L4 6Z'],
];

const Transport = () => {
  const [view, setView] = useState('ミックス');
  return (
    <footer className="flex h-[36px] shrink-0 items-stretch border-t-[4px] border-[#1b1d20] bg-[#373a3f]">
      <div className="mb-[4px] ml-[98px] flex items-stretch bg-[#131416] pr-[12px] pl-[6px] [clip-path:polygon(0_0,100%_0,calc(100%-12px)_100%,6px_100%)]">
        <Readout
          width="w-[26px]"
          top={<svg viewBox="0 0 18 10" className="h-[10px] w-[18px]" fill="none" stroke="#6b6f73"><circle cx="9" cy="5" r="4" strokeDasharray="2 1" /><circle cx="9" cy="5" r="1.5" /><path d="M1 3L3 5L1 7ZM17 3L15 5L17 7Z" fill="#6b6f73" stroke="none" /></svg>}
          bottom="MIDI"
        />
        <Readout
          width="w-[46px]"
          top={<span className="flex w-[41px] flex-col gap-px"><i className="h-[3px] bg-linear-to-r from-[#4fa9d8] from-27% to-[#2b2e31] to-27%" /><i className="h-[3px] bg-[#2b2e31]" /></span>}
          bottom="パフォーマンス"
        />
        <div className="flex w-[32px] items-center justify-center">
          <svg viewBox="0 0 16 16" className="size-[16px]" fill="none" stroke="#d5d7d8" strokeWidth="1.5"><circle cx="8" cy="8" r="6.8" strokeDasharray="1.3 2.26" /></svg>
        </div>
        <Readout width="w-[43px]" align="items-start" top="44.1 kHz" bottom={<span className="text-[7px] text-[#d5d7d8]">173.6 ms</span>} />
        <Readout width="w-[55px]" align="items-start" top="1:08 日" bottom="最大録音時間" />
        <Readout width="w-[49px]" align="items-end" top="00:02:00.622" bottom={<>秒<Down className="mr-1 text-[#85898d]" /></>} />
        <div className="ml-[14px] flex w-[96px] flex-col items-center justify-center gap-[2px] pr-1">
          <span className="text-[12px] font-bold text-[#e8eaeb]">00079.04.03.51</span>
          <span className="flex items-center gap-1 text-[6px] text-[#9b9fa2]">小節<Down /></span>
        </div>
        {NAV.map(([label, d]) => (
          <button key={label} aria-label={label} className="flex w-[17px] items-center justify-center">
            <svg viewBox="0 0 12 12" className="size-[12px]" fill="#c6c8ca"><path d={d} /></svg>
          </button>
        ))}
        <button aria-label="停止" className="ml-[3px] flex w-[23px] items-center justify-center"><span className="size-[13px] bg-[#c6c8ca]" /></button>
        <button aria-label="再生" className="flex w-[23px] items-center justify-center">
          <svg viewBox="0 0 11 13" className="h-[13px] w-[11px]" fill="#6fe23a"><path d="M0 0L11 6.5L0 13Z" /></svg>
        </button>
        <button aria-label="録音" className="flex w-[22px] items-center justify-center"><Dot className="size-[13px] bg-[#c6c8ca]" /></button>
        <button aria-label="ループ" className="flex w-[31px] items-center justify-center">
          <svg viewBox="0 0 21 14" className="h-[14px] w-[21px]" fill="none" stroke="#b4b7ba" strokeWidth="1.4"><path d="M4.5 12.3Q1 11 1 7Q1 1.2 7 1.2H14Q20 1.2 20 7Q20 12.5 15 12.5Q12.5 12.5 13 9.5L13.5 6.5M4.5 12.3Q8.3 12.5 8.3 9V6.5" /></svg>
        </button>
        <div className="flex w-[20px] items-center justify-between pr-[3px] pl-[5px] text-[7px] leading-[10px] text-[#3b8dbb]">
          <span className="flex flex-col"><span>L</span><span>R</span></span>
          <svg viewBox="0 0 4 12" className="h-[12px] w-[4px]" fill="none" stroke="#4b5054"><path d="M0 .5H3.5V11.5H0" /></svg>
        </div>
        <Readout width="w-[68px]" align="items-start" top="00125.01.01.00" bottom={<span className="text-[8px] text-[#d5d7d8]">00132.01.01.00</span>} />
        <Readout width="w-[24px]" top="オフ" bottom="同期" />
        <div className="grid w-[36px] grid-cols-2 place-items-center py-1">
          <svg viewBox="0 0 10 8" className="h-[8px] w-[10px]" fill="none" stroke="#b4b7ba"><path d="M0 3H3L5 5H10" /></svg>
          <svg viewBox="0 0 10 8" className="h-[8px] w-[10px]" fill="#b4b7ba"><path d="M0 1H1V7H0ZM1 3.5H4V1.5L7 3H10V5H7L4 6.5V4.5H1Z" /></svg>
          <svg viewBox="0 0 8 8" className="size-[7px]" fill="none" stroke="#b4b7ba" strokeWidth="1.4"><circle cx="4" cy="4" r="2.4" /><path d="M4 0V1M4 7V8M0 4H1M7 4H8M1.2 1.2L2 2M6 6L6.8 6.8M6.8 1.2L6 2M2 6L1.2 6.8" strokeWidth="1" /></svg>
          <svg viewBox="0 0 10 8" className="h-[8px] w-[10px]" fill="#b4b7ba"><path d="M0 4H3V1L4.5 3H6L7.5 1V4H10V5H7.5V7L6 5.5H4.5L3 7V5H0Z" /></svg>
        </div>
        <Readout
          width="w-[45px]"
          top={<span className="flex items-center gap-[7px] text-[#9b9fa2]"><Dot className="size-[6px] bg-[#6b6f73]" /><Wrench className="size-[7px]" /><svg viewBox="0 0 8 8" className="size-[7px]" fill="currentColor"><path d="M2.5 1H4L5 3L6 2L7.5 7H.5Z" /></svg></span>}
          bottom="メトロノーム"
        />
        <Readout width="w-[30px]" top="4 / 4" bottom="拍子" />
        <Readout width="w-[29px]" top="G" bottom="キー" />
        <Readout width="w-[30px]" top="157.00" bottom="テンポ" />
        <div className="ml-2 flex w-[57px] flex-col justify-center gap-[5px]">
          <div className="flex h-[6px] bg-[#26282c]">
            <div className="flex w-[38px] flex-col justify-between"><i className="h-[2px] bg-[#56b4e2]" /><i className="h-[2px] bg-[#56b4e2]" /></div>
          </div>
          <div className="flex h-[6px] items-center justify-between">
            <div className="h-full w-[43px] bg-[#26282c]"><div className="h-full w-[33px] border-r border-[#9fd4ee] bg-[#3b7fa5]" /></div>
            <svg viewBox="0 0 11 7" className="h-[7px] w-[11px]" fill="none" stroke="#56b4e2"><circle cx="3.5" cy="3.5" r="2.8" fill="#56b4e2" /><circle cx="7.3" cy="3.5" r="2.8" /></svg>
          </div>
        </div>
      </div>
      <div className="ml-auto flex pb-px text-[7px] text-[#c6c8ca]">
        {['編集', 'ミックス', 'ブラウズ'].map((v) => (
          <button key={v} onClick={() => setView(v)} className={clsx('border-l border-[#2b2e31] whitespace-nowrap', v === 'ブラウズ' ? 'w-[42px]' : 'w-[36px]', v === view && 'bg-[#2f7dd4] text-white')}>
            {v}
          </button>
        ))}
      </div>
    </footer>
  );
};

export default function App() {
  return (
    <div className="flex min-h-screen w-full flex-col overflow-hidden bg-[#1b1d20] leading-none select-none [font-family:'Liberation_Sans','Noto_Sans_CJK_JP',sans-serif] [font-feature-settings:'palt']">
      <TitleBar />
      <MenuBar />
      <Toolbar />
      <Arrange />
      <Console />
      <Transport />
    </div>
  );
}
